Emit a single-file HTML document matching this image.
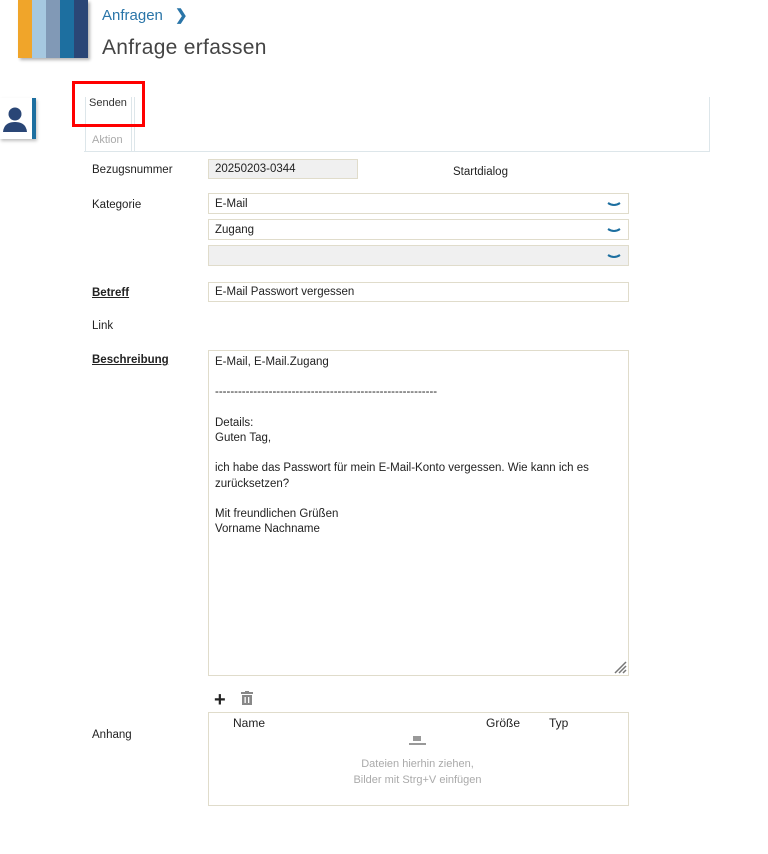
<!DOCTYPE html>
<html><head><meta charset="utf-8"><style>
*{margin:0;padding:0;box-sizing:border-box}
body{width:768px;height:854px;background:#fff;font-family:"Liberation Sans",sans-serif;font-size:12px;color:#222;position:relative;overflow:hidden}
.a{position:absolute}
.inp{position:absolute;left:208px;width:421px;border:1px solid #e0dccb;background:#fff;padding-left:6px;font-size:11.5px}
.chev{position:absolute;right:7px;top:7px}
.lbl{position:absolute;left:92px;font-size:11.5px}
</style></head><body>
<div class="a" style="left:18px;top:0;width:70px;height:58px;display:flex;box-shadow:2px 2px 3px rgba(0,0,0,.3)">
<div style="flex:1;background:#f0a52a"></div><div style="flex:1;background:#a6c8e0"></div><div style="flex:1;background:#8199b6"></div><div style="flex:1;background:#1d6fa0"></div><div style="flex:1;background:#2a4676"></div></div>
<div class="a" style="left:102px;top:6px;font-size:15px;color:#2a75a8">Anfragen <span style="margin-left:8px;font-weight:bold">❯</span></div>
<div class="a" style="left:102px;top:36px;font-size:21px;color:#444;letter-spacing:.3px">Anfrage erfassen</div>
<div class="a" style="left:0;top:98px;width:36px;height:41px;background:#fff;box-shadow:1px 2px 3px rgba(0,0,0,.25);border-right:4px solid #1d6fa0">
<svg width="28" height="34" style="position:absolute;left:2px;top:4px" viewBox="0 0 28 34"><circle cx="13" cy="12" r="6.5" fill="#2a4676"/><path d="M1 30 Q2 20 13 20 Q24 20 25 30 Z" fill="#2a4676"/></svg></div>
<div class="a" style="left:84px;top:97px;width:626px;height:55px;border-right:1px solid #dde6ea;border-bottom:1px solid #dde6ea"></div>
<div class="a" style="left:85px;top:97px;width:47px;height:55px;border-left:1px solid #dde6ea;border-right:1px solid #dde6ea"></div>
<div class="a" style="left:134px;top:97px;width:1px;height:55px;background:#dde6ea"></div>
<div class="a" style="left:89px;top:97px;font-size:11px;color:#333">Senden</div>
<div class="a" style="left:92px;top:134px;font-size:11px;color:#aaa">Aktion</div>
<div class="a" style="left:72px;top:81px;width:73px;height:46px;border:3px solid #f00"></div>

<div class="lbl" style="top:164px">Bezugsnummer</div>
<div class="inp" style="top:159px;width:150px;height:20px;background:#f0f0f0;line-height:19px">20250203-0344</div>
<div class="a" style="left:453px;top:166px;font-size:11.5px">Startdialog</div>
<div class="lbl" style="top:199px">Kategorie</div>
<div class="inp" style="top:193px;height:21px;line-height:20px">E-Mail<svg class="chev" width="14" height="8"><path d="M1 2 Q7 6 13 2" stroke="#1d6fa0" stroke-width="2" fill="none"/></svg></div>
<div class="inp" style="top:219px;height:21px;line-height:20px">Zugang<svg class="chev" width="14" height="8"><path d="M1 2 Q7 6 13 2" stroke="#1d6fa0" stroke-width="2" fill="none"/></svg></div>
<div class="inp" style="top:245px;height:21px;background:#f0f0f0"><svg class="chev" width="14" height="8"><path d="M1 2 Q7 6 13 2" stroke="#1d6fa0" stroke-width="2" fill="none"/></svg></div>
<div class="lbl" style="top:287px;font-weight:bold;text-decoration:underline">Betreff</div>
<div class="inp" style="top:282px;height:20px;line-height:19px">E-Mail Passwort vergessen</div>
<div class="lbl" style="top:320px">Link</div>
<div class="lbl" style="top:354px;font-weight:bold;text-decoration:underline">Beschreibung</div>
<div class="inp" style="top:350px;height:326px;padding-top:4px;line-height:15.2px">E-Mail, E-Mail.Zugang<br><br>----------------------------------------------------------<br><br>Details:<br>Guten Tag,<br><br>ich habe das Passwort für mein E-Mail-Konto vergessen. Wie kann ich es<br>zurücksetzen?<br><br>Mit freundlichen Grüßen<br>Vorname Nachname
<svg style="position:absolute;right:1px;bottom:1px" width="14" height="14"><path d="M13 2 L2 13 M13 6 L6 13 M13 10 L10 13" stroke="#777" stroke-width="1.5"/></svg></div>
<div class="a" style="left:214px;top:690px;font-size:20px;font-weight:bold;line-height:20px">+</div>
<svg class="a" style="left:240px;top:691px" width="14" height="15"><rect x="1" y="1" width="12" height="2" fill="#888"/><rect x="5" y="0" width="4" height="2" fill="#888"/><rect x="2" y="4" width="10" height="10" fill="#888"/><rect x="4.5" y="6" width="1.3" height="6" fill="#fff"/><rect x="8" y="6" width="1.3" height="6" fill="#fff"/></svg>
<div class="lbl" style="top:729px">Anhang</div>
<div class="inp" style="top:712px;height:94px"></div>
<div class="a" style="left:233px;top:716px">Name</div>
<div class="a" style="left:486px;top:716px">Größe</div>
<div class="a" style="left:549px;top:716px">Typ</div>
<div class="a" style="left:413px;top:736px;width:8px;height:5px;background:#999"></div>
<div class="a" style="left:409px;top:743px;width:17px;height:2px;background:#999"></div>
<div class="a" style="left:340px;top:757px;width:155px;text-align:center;font-size:11px;color:#aaa;line-height:15.5px">Dateien hierhin ziehen,<br>Bilder mit Strg+V einfügen</div>
</body></html>
